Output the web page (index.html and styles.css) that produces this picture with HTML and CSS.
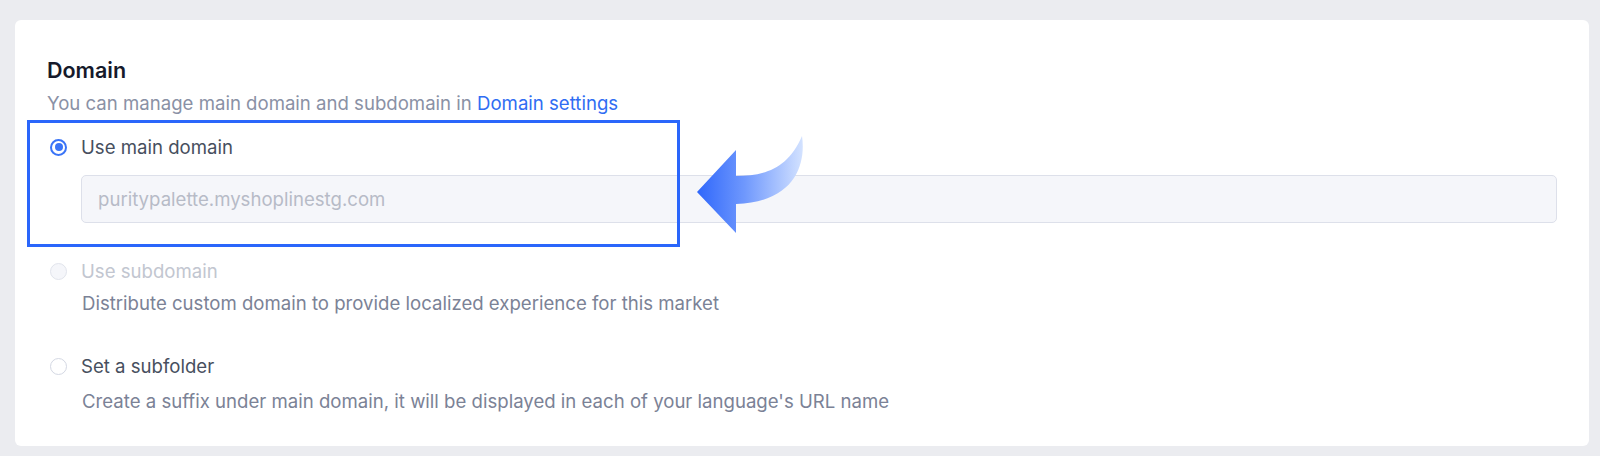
FILE: index.html
```html
<!DOCTYPE html>
<html lang="en">
<head>
<meta charset="utf-8">
<title>Domain</title>
<link rel="stylesheet" href="styles.css">
</head>
<body>
<div class="card">
  <h2 class="title">Domain</h2>
  <p class="subtitle">You can manage main domain and subdomain in <a class="link" href="#">Domain settings</a></p>

  <div class="option first">
    <label class="radio-row">
      <span class="radio checked"></span>
      <span class="radio-label">Use main domain</span>
    </label>
    <div class="input-wrap">
      <div class="input">puritypalette.myshoplinestg.com</div>
    </div>
  </div>

  <div class="option second">
    <label class="radio-row disabled">
      <span class="radio"></span>
      <span class="radio-label">Use subdomain</span>
    </label>
    <p class="desc desc-sub">Distribute custom domain to provide localized experience for this market</p>
  </div>

  <div class="option third">
    <label class="radio-row">
      <span class="radio"></span>
      <span class="radio-label">Set a subfolder</span>
    </label>
    <p class="desc desc-folder">Create a suffix under main domain, it will be displayed in each of your language's URL name</p>
  </div>

  <div class="highlight"></div>
  <svg class="arrow" width="120" height="104" viewBox="0 0 120 104" aria-hidden="true">
    <defs>
      <linearGradient id="ag" x1="0" y1="0" x2="1" y2="0">
        <stop offset="0" stop-color="#2f67fb"/>
        <stop offset="0.45" stop-color="#6f98fd"/>
        <stop offset="1" stop-color="#d3e2ff"/>
      </linearGradient>
    </defs>
    <path d="M5 60 L44 18 L44 44 C72 44 96 37 110 4 C114 31 104 70 44 72 L44 101 Z" fill="url(#ag)"/>
  </svg>
</div>
</body>
</html>
```

FILE: styles.css
```css
* { box-sizing: border-box; }
html, body { margin: 0; }
body {
  background: #ebecf0;
  padding: 20px 11px 10px 15px;
  font-family: Inter, "Noto Sans", "Liberation Sans", sans-serif;
  -webkit-font-smoothing: antialiased;
}
.card {
  position: relative;
  background: #ffffff;
  border-radius: 6px;
  height: 426px;
  padding: 37px 32px 0 32px;
}
.title {
  margin: 0;
  font-size: 21.5px;
  line-height: 26px;
  font-weight: 600;
  color: #161a2b;
}
.subtitle {
  margin: 8px 0 0;
  font-size: 18.6px;
  line-height: 24px;
  color: #8a91a5;
}
.link { color: #2f6df3; text-decoration: none; }
.option { display: flex; flex-direction: column; }
.option.first { margin-top: 20px; }
.option.second { margin-top: 36px; }
.option.third { margin-top: 39px; }
.radio-row {
  display: flex;
  align-items: center;
  gap: 14px;
  padding-left: 3px;
  height: 24px;
}
.radio {
  width: 17px;
  height: 17px;
  border-radius: 50%;
  border: 1.5px solid #d4d8e3;
  background: #fff;
  flex: none;
  position: relative;
}
.radio.checked {
  border: 2.5px solid #3a74f7;
}
.radio.checked::after {
  content: "";
  position: absolute;
  left: 50%; top: 50%;
  width: 8px; height: 8px;
  margin: -4px 0 0 -4px;
  border-radius: 50%;
  background: #3a74f7;
}
.radio-label {
  font-size: 18.6px;
  line-height: 24px;
  color: #474f5e;
}
.disabled .radio { background: #f5f6fa; border-color: #e1e4ec; }
.disabled .radio-label { color: #c2c6d0; }
.input-wrap { padding-left: 34px; margin-top: 16px; }
.input {
  height: 48px;
  background: #f5f6fa;
  border: 1px solid #dde0ea;
  border-radius: 5px;
  padding: 0 16px;
  display: flex;
  align-items: center;
  font-size: 18.6px;
  color: #b7bbc7;
}
.desc {
  margin: 8px 0 0 35px;
  font-size: 18.6px;
  line-height: 24px;
  color: #7b8296;
}
.desc-folder { margin-top: 11px; }
.highlight {
  position: absolute;
  left: 12px;
  top: 100px;
  width: 653px;
  height: 127px;
  border: 3px solid #2a66fb;
}
.arrow {
  position: absolute;
  left: 677px;
  top: 112px;
}
```
